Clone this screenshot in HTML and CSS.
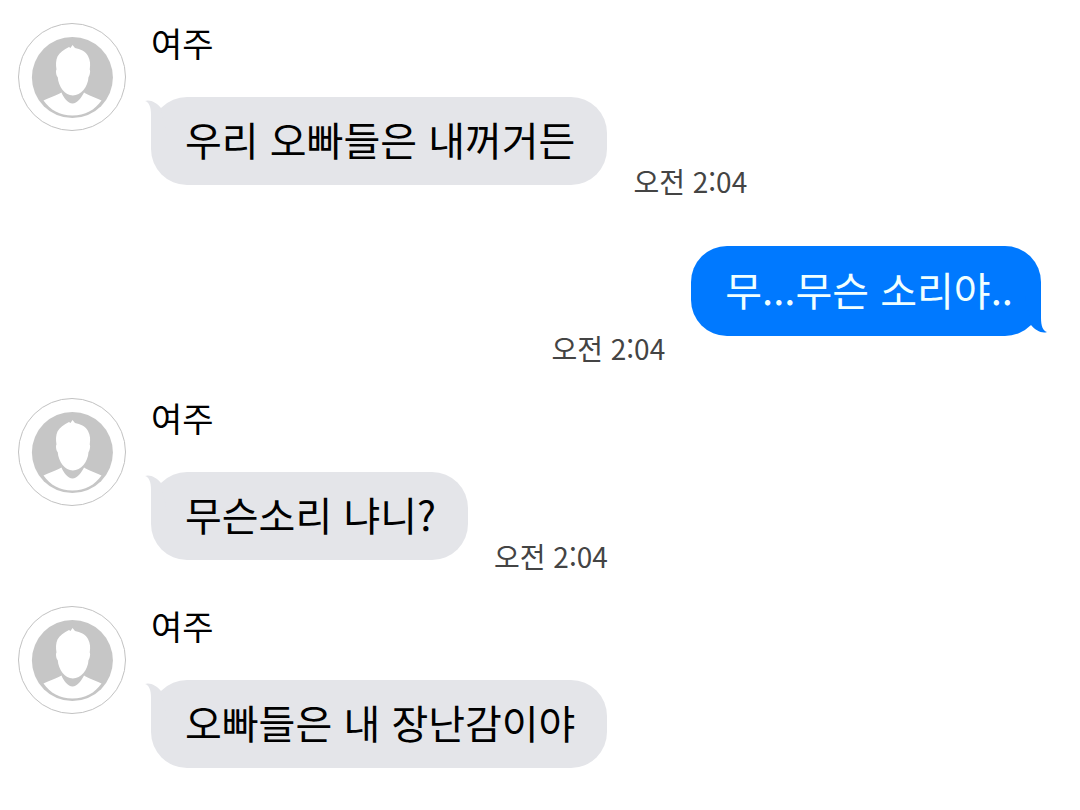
FILE: index.html
```
<!DOCTYPE html>
<html lang="ko">
<head>
<meta charset="utf-8">
<meta name="viewport" content="width=device-width, initial-scale=1">
<title>여주</title>
<link rel="stylesheet" href="styles.css">
</head>
<body>
<svg width="0" height="0" class="defs" aria-hidden="true">
  <defs>
    <symbol id="avatar" viewBox="0 0 108 108">
      <circle cx="54" cy="54" r="53.5" fill="#fff" stroke="#c2c2c2" stroke-width="1"/>
      <circle cx="54.4" cy="54.5" r="40.5" fill="#c6c6c6"/>
      <path fill="#fff" d="M25.500 77.500C31 74.500 39 72.500 43.500 69.500C45 74 50 80.500 54.500 80.500C59 80.500 64 74 66 69.500C70 72.500 78 74.500 83.500 77.500C77 87 67 92.500 54.500 92.500C42 92.500 32 87 25.500 77.500Z"/>
      <path fill="#fff" d="M38.500 46.500C37.700 42 37.800 37 39.500 33.500C41.500 29.500 46 26.500 51 24L52.500 25L54.500 22L57 25C62 26 67.500 28 70 33C72.300 37 72.500 42 71.700 46.500C72.700 47.500 71.700 53 70.500 54C70 64 63 72.500 54.800 72.500C47 72.500 40.500 64 39.700 54C38.200 53 37.500 47.500 38.500 46.500Z"/>
    </symbol>
    <symbol id="tail" viewBox="0 0 22 40">
      <path d="M0 4C5 2 12 6 16 11L22 40H6V18C6 10 4 5 0 4Z" fill="currentColor"/>
    </symbol>
  </defs>
</svg>
<main class="chat">
  <article class="message">
    <svg class="avatar" role="img" aria-label="여주"><use href="#avatar"/></svg>
    <div class="content">
      <h2 class="name">여주</h2>
      <div class="line">
        <p class="bubble">우리 오빠들은 내꺼거든<svg class="tail" aria-hidden="true"><use href="#tail"/></svg></p>
        <time class="time" datetime="02:04">오전 2:04</time>
      </div>
    </div>
  </article>
  <article class="message sent">
    <div class="line">
      <time class="time" datetime="02:04">오전 2:04</time>
      <p class="bubble">무...무슨 소리야..<svg class="tail" aria-hidden="true"><use href="#tail"/></svg></p>
    </div>
  </article>
  <article class="message">
    <svg class="avatar" role="img" aria-label="여주"><use href="#avatar"/></svg>
    <div class="content">
      <h2 class="name">여주</h2>
      <div class="line">
        <p class="bubble">무슨소리 냐니?<svg class="tail" aria-hidden="true"><use href="#tail"/></svg></p>
        <time class="time" datetime="02:04">오전 2:04</time>
      </div>
    </div>
  </article>
  <article class="message">
    <svg class="avatar" role="img" aria-label="여주"><use href="#avatar"/></svg>
    <div class="content">
      <h2 class="name">여주</h2>
      <div class="line">
        <p class="bubble">오빠들은 내 장난감이야<svg class="tail" aria-hidden="true"><use href="#tail"/></svg></p>
      </div>
    </div>
  </article>
</main>
</body>
</html>
```
FILE: styles.css
```
* { box-sizing: border-box; }
body {
  margin: 0;
  background: #fff;
  color: #000;
  font-family: "Noto Sans CJK KR", sans-serif;
}
.defs { position: absolute; }
.chat { padding: 23px 39px 23px 18px; }
.message {
  display: flex;
  align-items: flex-start;
  gap: 25px;
  margin-bottom: 34px;
}
.message:first-child { margin-bottom: 49px; }
.message:last-child { margin-bottom: 0; }
.sent { justify-content: flex-end; }
.avatar { flex: none; width: 108px; height: 108px; }
.name {
  margin: 0 0 34px;
  font-size: 34px;
  font-weight: 400;
  line-height: 40px;
}
.line { display: flex; align-items: flex-end; gap: 26px; }
.bubble {
  position: relative;
  margin: 0 0 12px;
  padding: 10px 32px 14px 34px;
  border-radius: 36px;
  background: #e4e5e9;
  font-size: 40px;
  line-height: 64px;
}
.time {
  color: #444;
  font-size: 28px;
  font-weight: 400;
  line-height: 32px;
}
.tail {
  position: absolute;
  top: 0;
  left: -6px;
  width: 22px;
  height: 40px;
  color: #e4e5e9;
}
.sent .bubble {
  margin-bottom: 28px;
  padding: 11px 28px 15px 34px;
  background: #0079ff;
  color: #f0ffff;
}
.sent .tail {
  top: auto;
  bottom: 0;
  left: auto;
  right: -6px;
  color: #0079ff;
  transform: rotate(180deg);
}
```
